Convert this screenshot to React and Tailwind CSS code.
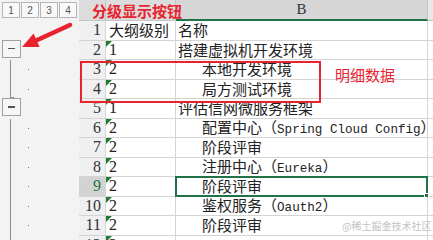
import React from 'react';

const cjk = { fontFamily: '"Noto Sans CJK SC", "Liberation Sans", sans-serif' };
const serif = { fontFamily: '"Liberation Serif", "Noto Sans CJK SC", serif' };

// outline level 1 rows carry the collapse button, level 2 rows are detail rows
const rows = [
  { n: 1, a: '大纲级别', b: '名称', head: true },
  { n: 2, a: '1', b: '搭建虚拟机开发环境', btn: true },
  { n: 3, a: '2', b: '本地开发环境', detail: true, line: true },
  { n: 4, a: '2', b: '局方测试环境', detail: true, line: 'end' },
  { n: 5, a: '1', b: '评估信网微服务框架', btn: true },
  { n: 6, a: '2', b: ['配置中心（', 'Spring Cloud Config', '）'], detail: true, line: true },
  { n: 7, a: '2', b: '阶段评审', detail: true, line: true },
  { n: 8, a: '2', b: ['注册中心（', 'Eureka', '）'], detail: true, line: true },
  { n: 9, a: '2', b: '阶段评审', detail: true, line: true, selected: true },
  { n: 10, a: '2', b: ['鉴权服务（', 'Oauth2', '）'], detail: true, line: true },
  { n: 11, a: '2', b: '阶段评审', detail: true, line: true },
  { n: 12, a: '2', b: '', detail: true, line: true },
];

function CellText({ value }) {
  if (Array.isArray(value)) {
    return (
      <span>
        {value[0]}
        <span className="text-[12.6px]" style={{ fontFamily: '"Liberation Mono", monospace' }}>{value[1]}</span>
        {value[2]}
      </span>
    );
  }
  return <span>{value}</span>;
}

function OutlineCell({ row }) {
  return (
    <div className="w-[79px] h-full relative shrink-0 bg-[#f3f3f3]">
      {row.btn && (
        <div className="absolute left-[2px] top-[-1px] w-[19px] h-[18px] border border-[#a0a0a0] bg-[#f6f6f6] flex items-center justify-center">
          <div className="w-[7px] h-[1.5px] bg-[#555]" />
        </div>
      )}
      {row.line && (
        <div className={`absolute left-[10px] top-0 w-px bg-[#8c8c8c] ${row.line === 'end' ? 'h-[17px]' : 'h-full'}`} />
      )}
      {row.line === 'end' && <div className="absolute left-[10px] top-[17px] w-[4px] h-px bg-[#8c8c8c]" />}
      {row.detail && <div className="absolute left-[28px] top-[9px] w-px h-px bg-[#777]" />}
    </div>
  );
}

function Row({ row }) {
  return (
    <div className="flex h-[19.5px] shrink-0">
      <OutlineCell row={row} />
      <div
        className={`w-[27px] shrink-0 border-r border-b border-[#d4d4d4] flex items-center justify-end pr-[4px] text-[16px] ${
          row.selected ? 'bg-[#d3d3d3] text-[#217346]' : 'bg-[#f0f0f0] text-[#333]'
        }`}
        style={serif}
      >
        {row.n}
      </div>
      <div
        className="w-[70px] shrink-0 border-r border-b border-[#d4d4d4] relative flex items-center pl-[3px] text-[16px] text-[#222]"
        style={row.head ? cjk : serif}
      >
        {!row.head && (
          <div className="absolute left-0 top-0 w-0 h-0 border-t-[6px] border-r-[6px] border-t-[#1e7b34] border-r-transparent" />
        )}
        <span className={row.head ? 'text-[15px]' : ''}>{row.a}</span>
      </div>
      <div
        className={`w-[252px] shrink-0 border-r border-b border-[#d4d4d4] relative flex items-center text-[15px] text-[#222] whitespace-nowrap ${
          row.detail ? 'pl-[26px]' : 'pl-[2px]'
        }`}
        style={cjk}
      >
        {row.selected && (
          <div className="absolute inset-[-1px] border-2 border-[#217346]">
            <div className="absolute right-[-3px] bottom-[-3px] w-[5px] h-[5px] bg-[#217346] border border-white" />
          </div>
        )}
        <CellText value={row.b} />
      </div>
      <div className="flex-1 border-b border-[#d4d4d4]" />
    </div>
  );
}

export default function App() {
  return (
    <div className="w-[433px] h-[240px] overflow-hidden relative bg-white select-none">
      {/* header row */}
      <div className="flex h-[21px]">
        <div className="w-[79px] shrink-0 bg-[#f3f3f3] flex gap-px pl-[2px] pt-[2px]">
          {[1, 2, 3, 4].map((n) => (
            <div
              key={n}
              className="w-[18px] h-[16px] border border-[#b5b5b5] bg-[#f8f8f8] flex items-center justify-center text-[10px] text-[#555]"
              style={{ fontFamily: '"Liberation Sans", sans-serif' }}
            >
              {n}
            </div>
          ))}
        </div>
        <div className="w-[27px] shrink-0 bg-[#dcdcdc] border-r border-b border-[#c6c6c6]" />
        <div className="w-[70px] shrink-0 bg-[#dcdcdc] border-r border-b border-[#c6c6c6]" />
        <div
          className="w-[252px] shrink-0 bg-[#d6d6d6] border-r border-[#c6c6c6] border-b-2 border-b-[#217346] flex items-center justify-center text-[15px] text-[#333]"
          style={serif}
        >
          B
        </div>
        <div className="flex-1 bg-[#e8e8e8] border-b border-[#c6c6c6]" />
      </div>

      {rows.map((row) => (
        <Row key={row.n} row={row} />
      ))}

      {/* annotations */}
      <div className="absolute left-[92px] top-[1px] text-[15px] font-bold text-[#e8232f] leading-[20px]" style={cjk}>
        分级显示按钮
      </div>
      <svg className="absolute left-0 top-0" width="90" height="70" viewBox="0 0 90 70">
        <line x1="70" y1="25" x2="34" y2="41.5" stroke="#e8232f" strokeWidth="4.5" strokeLinecap="round" />
        <polygon points="22,47 33.6,33.4 39.6,47" fill="#e8232f" />
      </svg>
      <div className="absolute left-[80px] top-[61px] w-[241px] h-[42px] border-2 border-[#e8232f]" />
      <div className="absolute left-[335px] top-[65px] text-[15px] text-[#e8232f] leading-[20px]" style={cjk}>
        明细数据
      </div>
      <div className="absolute left-[342px] top-[219px] text-[10px] text-[#c2c2c2] leading-[14px]" style={cjk}>
        @稀土掘金技术社区
      </div>
    </div>
  );
}
